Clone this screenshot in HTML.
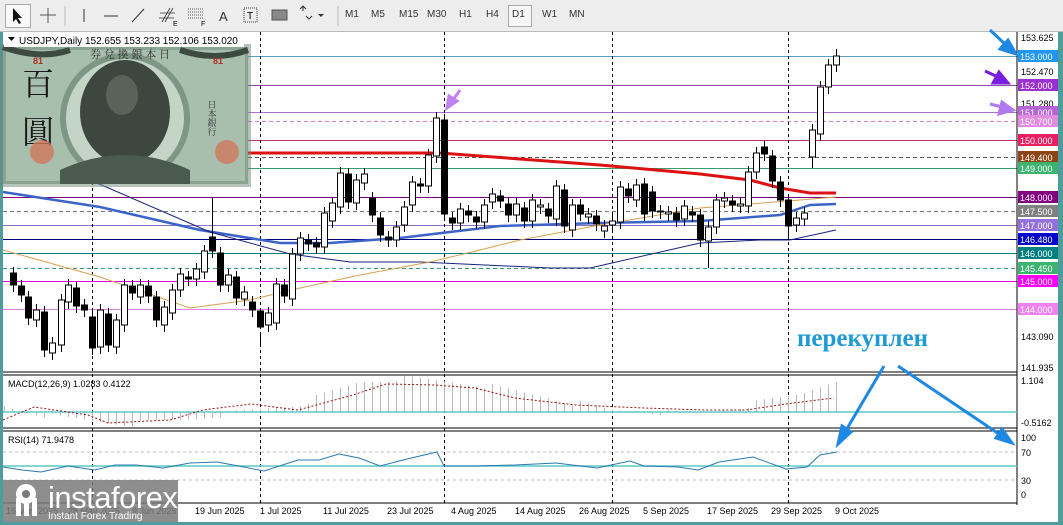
<!DOCTYPE html>
<html><head><meta charset="utf-8"><style>
html,body{margin:0;padding:0;width:1063px;height:525px;overflow:hidden;background:#4e9c9c;font-family:"Liberation Sans",sans-serif}
#tb{position:absolute;left:0;top:0;width:1063px;height:31px;background:#ededed;border-bottom:1px solid #bbb}
#tb span{position:absolute;top:9px;font-size:10px;color:#333}
#chart{position:absolute;left:3px;top:32px;width:1055px;height:490px;background:#fff}
</style></head><body>
<div id="tb">
<div style="position:absolute;left:5px;top:4px;width:24px;height:22px;border:1px solid #aaa;background:#f8f8f8"></div>
<svg width="340" height="31" style="position:absolute;left:0;top:0;font-family:'Liberation Sans',sans-serif">
<path d="M13 8 L13 22 L16 19 L19 24 L21 23 L18 18 L22 18 Z" fill="#111"/>
<path d="M48 8 V23 M40 15 H56" stroke="#555"/>
<line x1="65" y1="6" x2="65" y2="26" stroke="#bbb"/>
<path d="M84 9 V22" stroke="#333"/>
<path d="M104 16 H118" stroke="#333"/>
<path d="M132 22 L144 9" stroke="#333"/>
<path d="M162 22 L170 8 M165 22 L173 8 M160 13 H175 M159 18 H174" stroke="#333" stroke-width="0.8"/><text x="173" y="26" font-size="7">E</text>
<path d="M188 9 H204 M188 12 H204 M188 15 H204 M188 18 H204" stroke="#555" stroke-dasharray="1 1"/><text x="201" y="26" font-size="7">F</text>
<text x="219" y="21" font-size="13" fill="#333">A</text>
<rect x="244" y="8" width="13" height="14" fill="none" stroke="#333" stroke-dasharray="1 1"/><text x="247" y="19" font-size="10">T</text>
<rect x="272" y="10" width="15" height="10" fill="#888" stroke="#555"/>
<path d="M300 9 l3 -3 3 3 M303 6 v5 M306 16 l3 3 3 -3" stroke="#333" fill="none"/><path d="M318 14 l3 3 3 -3z" fill="#333"/>
<line x1="338" y1="6" x2="338" y2="26" stroke="#bbb"/>
</svg>
<div style="position:absolute;left:508px;top:5px;width:22px;height:20px;border:1px solid #aaa;background:#f6f6f6"></div>
<span style="left:345px">M1</span><span style="left:371px">M5</span><span style="left:399px">M15</span><span style="left:427px">M30</span><span style="left:459px">H1</span><span style="left:486px">H4</span><span style="left:512px">D1</span><span style="left:542px">W1</span><span style="left:569px">MN</span>
</div>
<div id="chart"></div>
<svg id="s" width="1063" height="525" style="position:absolute;left:0;top:0;font-family:'Liberation Sans',sans-serif">
<g id="levels"></g>
<g id="vd" stroke="#000" stroke-dasharray="3 3"></g>
<g id="ma" fill="none">
<polyline points="3,192 100,207 200,230 280,243 330,243 400,238 500,226 600,223 700,221 780,215 810,205 836,204" stroke="#3c64c8" stroke-width="2.5"/>
<polyline points="90,180 210,232 290,254 350,262 420,262 550,268 590,268 700,243 760,240 790,240 836,230" stroke="#1a237e" stroke-width="1"/>
<polyline points="3,250 100,277 190,308 250,300 300,288 360,275 430,262 480,250 520,240 600,225 700,208 800,200 836,197" stroke="#d9a050" stroke-width="1"/>
<polyline points="248,153 440,153 600,165 700,174 750,180 780,188 810,193 836,193" stroke="#dd1111" stroke-width="3"/>
</g>
<g id="cd"></g>
<!-- banknote -->
<g>
<rect x="3" y="47" width="245" height="137" fill="#a9bfae"/>
<rect x="3" y="47" width="245" height="137" fill="none" stroke="#6d8876" stroke-width="6" opacity=".5"/>
<ellipse cx="125" cy="118" rx="62" ry="62" fill="#c4d4c6" stroke="#7e9785" stroke-width="6"/>
<ellipse cx="125" cy="112" rx="45" ry="52" fill="#3d463f"/>
<ellipse cx="122" cy="95" rx="16" ry="20" fill="#5a625a"/>
<path d="M60 170 Q125 140 190 170 L190 184 L60 184 Z" fill="#4a5a4e"/>
<path d="M3 47 Q40 60 70 50 M180 50 Q215 62 248 50" stroke="#3c4a40" stroke-width="6" fill="none"/>
<text x="22" y="95" font-size="32" style="font-family:'Noto Serif CJK SC',serif" fill="#1a1a1a">百</text>
<text x="22" y="143" font-size="32" style="font-family:'Noto Serif CJK SC',serif" fill="#1a1a1a">圓</text>
<text x="33" y="64" font-size="9" fill="#b03020" font-weight="bold">81</text>
<text x="213" y="64" font-size="9" fill="#b03020" font-weight="bold">81</text>
<text x="90" y="58" font-size="11" fill="#333" style="font-family:'Noto Serif CJK SC',serif">券 兌 換 銀 本 日</text>
<text x="212" y="100" font-size="9" fill="#333" style="font-family:'Noto Serif CJK SC',serif" writing-mode="tb">日本銀行</text>
<circle cx="42" cy="152" r="12" fill="#d0785c" opacity=".8"/><circle cx="227" cy="152" r="12" fill="#d0785c" opacity=".8"/>
</g>
<rect x="4" y="32" width="240" height="15" fill="#fff"/>
<path d="M8 37 h7 l-3.5 4z" fill="#000"/>
<text x="19" y="44" font-size="10">USDJPY,Daily  152.655 153.233 152.106 153.020</text>
<line x1="1017" y1="32" x2="1017" y2="505" stroke="#000"/>
<line x1="3" y1="372" x2="1017" y2="372" stroke="#000"/><line x1="3" y1="375" x2="1017" y2="375" stroke="#000"/>
<line x1="3" y1="428" x2="1017" y2="428" stroke="#000"/><line x1="3" y1="431" x2="1017" y2="431" stroke="#000"/>
<line x1="3" y1="503" x2="1017" y2="503" stroke="#000"/>
<g id="hist" stroke="#b8b8b8"></g>
<line x1="3" y1="412" x2="1017" y2="412" stroke="#5fc8c8" stroke-width="1.5"/>
<polyline points="3,420 34,407 88,415 108,423 170,420 203,410 251,404 298,410 353,395 386,384 434,385 475,388 515,398 576,405 644,408 705,410 746,410 786,404 834,398" fill="none" stroke="#a01010" stroke-dasharray="2 2"/>
<text x="8" y="387" font-size="9">MACD(12,26,9) 1.0283 0.4122</text>
<line x1="3" y1="452" x2="1017" y2="452" stroke="#bbb" stroke-dasharray="3 3"/>
<line x1="3" y1="480" x2="1017" y2="480" stroke="#bbb" stroke-dasharray="3 3"/>
<line x1="3" y1="466" x2="1017" y2="466" stroke="#5fc8c8" stroke-width="1.5"/>
<polyline points="3,467 22,470 41,472 68,466 95,470 115,465 136,465 163,468 190,463 217,462 244,467 264,471 298,460 319,460 339,454 359,458 380,466 407,459 437,452 444,466 475,466 515,465 556,463 597,468 630,461 644,466 678,467 698,470 719,462 753,457 786,469 807,467 820,455 837,452" fill="none" stroke="#2a7ab0"/>
<text x="8" y="443" font-size="9">RSI(14) 71.9478</text>
<g font-size="9" fill="#000">
<text x="1021" y="41">153.625</text><text x="1021" y="75">152.470</text><text x="1021" y="107">151.280</text>
<text x="1021" y="340">143.090</text><text x="1021" y="371">141.935</text>
<text x="1021" y="384">1.104</text><text x="1021" y="426">-0.5162</text>
<text x="1021" y="441">100</text><text x="1021" y="456">70</text><text x="1021" y="484">30</text><text x="1021" y="498">0</text>
</g>
<g id="labels" font-size="9" fill="#fff"></g>
<g font-size="9" fill="#000">
<text x="6" y="514">16 May 2025</text><text x="68" y="514">28 May 2025</text><text x="132" y="514">9 Jun 2025</text>
<text x="195" y="514">19 Jun 2025</text><text x="260" y="514">1 Jul 2025</text><text x="323" y="514">11 Jul 2025</text><text x="387" y="514">23 Jul 2025</text><text x="451" y="514">4 Aug 2025</text><text x="515" y="514">14 Aug 2025</text><text x="579" y="514">26 Aug 2025</text><text x="643" y="514">5 Sep 2025</text><text x="707" y="514">17 Sep 2025</text><text x="771" y="514">29 Sep 2025</text><text x="835" y="514">9 Oct 2025</text>
</g>
<text x="797" y="346" font-size="25" font-weight="bold" style="font-family:'Liberation Serif',serif" fill="#1e9ad6">перекуплен</text>
<g stroke="#1e88e5" stroke-width="3" fill="#1e88e5">
<line x1="884" y1="366" x2="845" y2="432"/><path d="M838 444 L842 426 L851 432 Z"/>
<line x1="898" y1="366" x2="1002" y2="436"/><path d="M1012 443 L996 438 L1002 429 Z"/>
<line x1="990" y1="30" x2="1007" y2="46"/><path d="M1016 54 L1000 49 L1008 40 Z"/>
</g>
<g stroke="#7a1de0" stroke-width="3" fill="#7a1de0"><line x1="985" y1="71" x2="998" y2="77"/><path d="M1008 83 L993 83 L999 72 Z"/></g>
<g stroke="#b07af0" stroke-width="3" fill="#b07af0"><line x1="990" y1="104" x2="1002" y2="107"/><path d="M1013 110 L999 114 L1002 102 Z"/></g>
<g stroke="#c080f0" stroke-width="3" fill="#c080f0"><line x1="460" y1="90" x2="453" y2="100"/><path d="M447 108 L449 96 L457 101 Z"/></g>
<rect x="3" y="480" width="175" height="42" fill="#7a7a7a" opacity=".85"/>
<g fill="#fff"><circle cx="26" cy="494" r="10"/><circle cx="26" cy="494" r="4" fill="#7a7a7a"/><rect x="16" y="498" width="5" height="18"/><rect x="24" y="498" width="5" height="18"/><rect x="32" y="498" width="5" height="18"/></g>
<text x="48" y="508" font-size="31" fill="#fff" letter-spacing="-0.5">instaforex</text>
<text x="48" y="519" font-size="10" fill="#fff">Instant Forex Trading</text>
</svg>
<script>
var ns="http://www.w3.org/2000/svg";
function el(p,t,a){var e=document.createElementNS(ns,t);for(var k in a)e.setAttribute(k,a[k]);p.appendChild(e);return e;}
var L=document.getElementById('levels');
var lv=[[56,'#5aa0c0','#2196f3','153.000',0,248],[85,'#8e44ad','#9b30d0','152.000',0,248],[112,'#b070d0','#b565d6','151.000',0,248],[121,'#d080d0','#e08ce0','150.700',1,248],[140,'#c0306a','#e91e63','150.000',0,248],[157,'#555','#8b4513','149.400',1,248],[168,'#3a9a70','#3cb371','149.000',0,248],[197,'#800080','#800080','148.000',0,3],[211,'#777','#808080','147.500',1,3],[225,'#9070c0','#9370db','147.000',0,3],[239,'#000080','#0000cd','146.480',0,3],[253,'#008080','#008080','146.000',0,3],[268,'#3a9a70','#3cb371','145.450',1,3],[281,'#e000e0','#ff00ff','145.000',0,3],[309,'#e080e0','#ee82ee','144.000',0,3]];
var LB=document.getElementById('labels');
lv.forEach(function(v){var a={x1:v[5],x2:1017,y1:v[0]+.5,y2:v[0]+.5,stroke:v[1]};if(v[4])a['stroke-dasharray']='4 3';el(L,'line',a);el(LB,'rect',{x:1018,y:v[0]-6,width:40,height:12,fill:v[2]});var t=el(LB,'text',{x:1020,y:v[0]+4});t.textContent=v[3];});
var V=document.getElementById('vd');[92,260,444,612,788].forEach(function(x){el(V,'line',{x1:x+.5,x2:x+.5,y1:32,y2:503});});
var C=[[13,273,285,1],[21,286,295,1],[28,297,318,1],[36,310,320,0],[44,312,350,1],[52,343,353,0],[61,300,345,0],[68,285,302,0],[76,288,306,1],[84,305,310,1],[92,317,348,1],[100,310,347,0],[108,314,345,1],[116,320,347,0],[124,285,325,0],[132,286,293,1],[140,285,297,0],[148,286,296,1],[156,297,320,1],[164,307,325,0],[172,290,313,0],[180,274,290,0],[188,277,279,1],[196,269,279,0],[204,251,272,0],[212,237,251,1,197],[220,253,285,1],[228,275,285,0],[236,277,298,1],[244,292,299,0],[252,302,310,1],[260,311,327,1,345],[268,313,325,0],[276,284,323,0],[284,285,296,1],[292,254,299,0],[300,238,254,0],[308,240,244,1],[316,243,247,1],[324,213,247,0],[332,203,221,0],[340,173,207,0],[348,174,202,1],[356,180,203,0],[364,174,183,0],[372,198,215,1],[380,218,235,1],[388,237,240,1],[396,227,240,0],[404,207,225,0],[412,182,205,0],[420,184,186,1],[428,155,186,0],[436,118,156,0],[444,120,214,1],[452,218,223,1],[460,209,223,0],[468,211,215,1],[476,217,222,1],[484,205,222,0],[492,194,202,0],[500,196,201,1],[508,204,215,1],[516,204,215,0],[524,208,221,1],[532,200,221,0],[540,205,207,0],[548,209,216,1],[556,186,219,0],[564,190,226,1],[572,205,230,0],[580,205,214,1],[588,214,217,0],[596,216,224,1],[604,226,231,0],[612,221,225,0],[620,187,222,0],[628,189,196,1],[636,185,200,0],[644,184,214,1],[652,192,211,1],[660,211,212,0],[668,212,214,0],[676,213,220,1],[684,206,219,0],[692,212,215,1],[700,215,240,1],[708,227,241,0,null,268],[716,200,227,0],[724,198,201,0],[732,201,205,1],[740,204,206,0],[748,172,206,0],[756,153,172,0],[764,147,154,1],[772,156,181,1],[780,182,200,1],[788,200,226,1,null,240],[796,218,225,0],[804,213,219,0],[812,130,157,0,null,168],[820,87,134,0],[828,65,87,0],[836,56,65,0,49]];
var G=document.getElementById('cd');
C.forEach(function(c){var x=c[0],t=c[1],b=c[2],h=Math.max(b-t,1);var wt=c[4]||t-6,wb=c[5]||b+7;el(G,'line',{x1:x+.5,x2:x+.5,y1:wt,y2:wb,stroke:'#000'});el(G,'rect',{x:x-2.5,y:t,width:6,height:h,fill:c[3]?'#000':'#fff',stroke:'#000'});});
var H=document.getElementById('hist');
function hv(x){var pts=[[3,6],[60,-6],[130,-12],[197,-6],[240,0],[300,8],[359,30],[400,34],[475,28],[540,16],[610,2],[700,-2],[753,8],[800,18],[840,35]];for(var i=1;i<pts.length;i++){if(x<=pts[i][0]){var a=pts[i-1],b=pts[i];return a[1]+(b[1]-a[1])*(x-a[0])/(b[0]-a[0]);}}return 0;}
for(var x=4;x<=838;x+=8){var v=hv(x)+(((x*37)%11)-5)*0.6;el(H,'line',{x1:x+.5,x2:x+.5,y1:412,y2:412-v});}
</script>
</body></html>
